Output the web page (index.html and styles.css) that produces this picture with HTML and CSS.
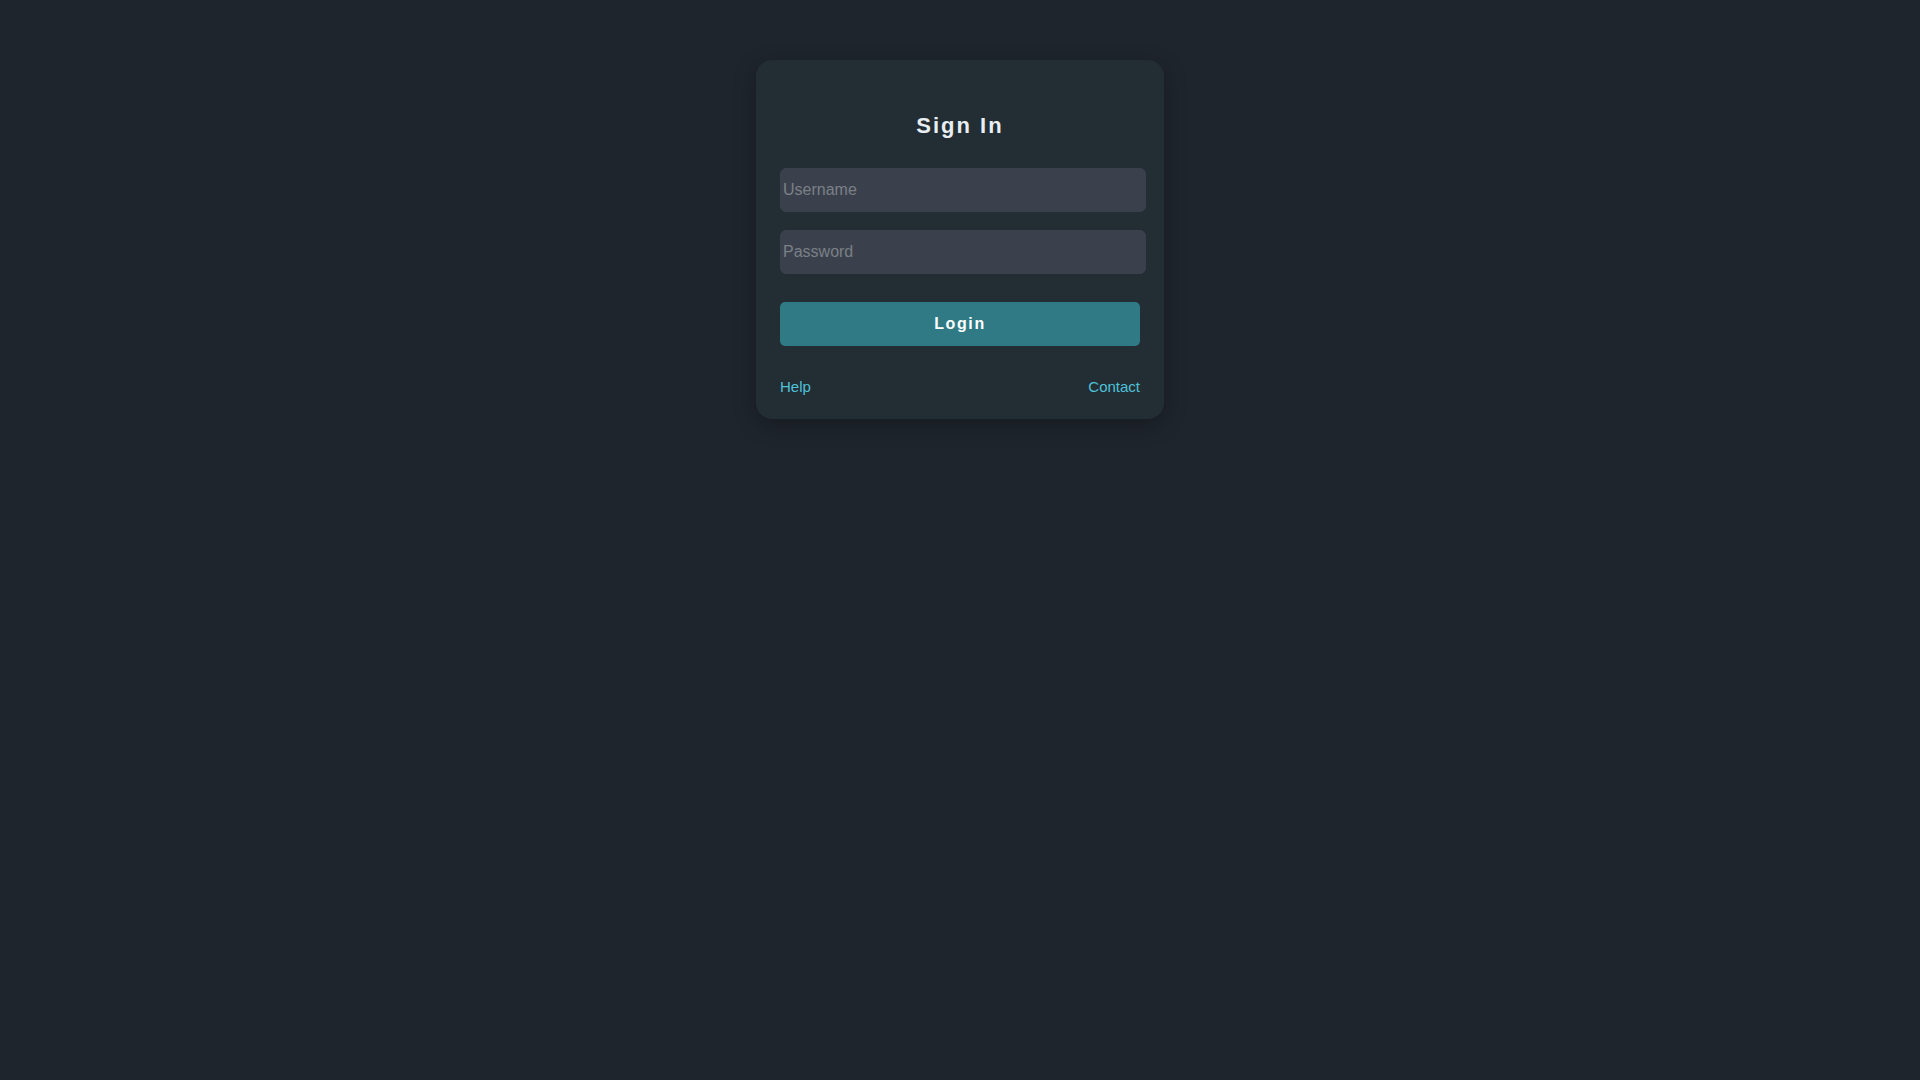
FILE: index.html
```html
<!DOCTYPE html>
<html lang="en">
<head>
<meta charset="utf-8">
<title>Sign In</title>
<link rel="stylesheet" href="styles.css">
</head>
<body>
<main class="page">
  <form class="card">
    <h2 class="title">Sign In</h2>
    <input class="field" type="text" placeholder="Username">
    <input class="field" type="password" placeholder="Password">
    <button class="btn" type="button">Login</button>
    <div class="links">
      <a href="#" class="link">Help</a>
      <a href="#" class="link">Contact</a>
    </div>
  </form>
</main>
</body>
</html>
```

FILE: styles.css
```css
html, body {
  margin: 0;
  padding: 0;
  height: 100%;
}
body {
  background: #1f252d;
  font-family: "Liberation Sans", Arial, sans-serif;
}
.page {
  display: flex;
  justify-content: center;
  padding-top: 60px;
}
.card {
  width: 360px;
  padding: 24px;
  background: #232d34;
  border-radius: 16px;
  box-shadow: 0 6px 22px rgba(0, 0, 0, 0.28);
  display: flex;
  flex-direction: column;
}
.title {
  margin: 29px 0 29px;
  font-size: 22px;
  line-height: 26px;
  font-weight: bold;
  letter-spacing: 2px;
  text-align: center;
  color: #e8eef2;
}
.field {
  box-sizing: content-box;
  width: 100%;
  height: 38px;
  padding: 2px;
  margin: 0 0 18px;
  border: 1px solid #3a414c;
  border-radius: 6px;
  background: #3a414c;
  color: #e8eef2;
  font-family: "Liberation Sans", Arial, sans-serif;
  font-size: 16px;
  outline: none;
}
.field::placeholder {
  color: #7b8087;
}
.btn {
  margin-top: 10px;
  height: 44px;
  width: 100%;
  border: none;
  border-radius: 5px;
  background: #2f7a84;
  color: #ffffff;
  font-family: "Liberation Sans", Arial, sans-serif;
  font-size: 16px;
  font-weight: bold;
  letter-spacing: 1.6px;
  cursor: pointer;
}
.links {
  margin-top: 32px;
  display: flex;
  justify-content: space-between;
  line-height: 17px;
}
.link {
  font-size: 15px;
  color: #4fc2d9;
  text-decoration: none;
}
```
